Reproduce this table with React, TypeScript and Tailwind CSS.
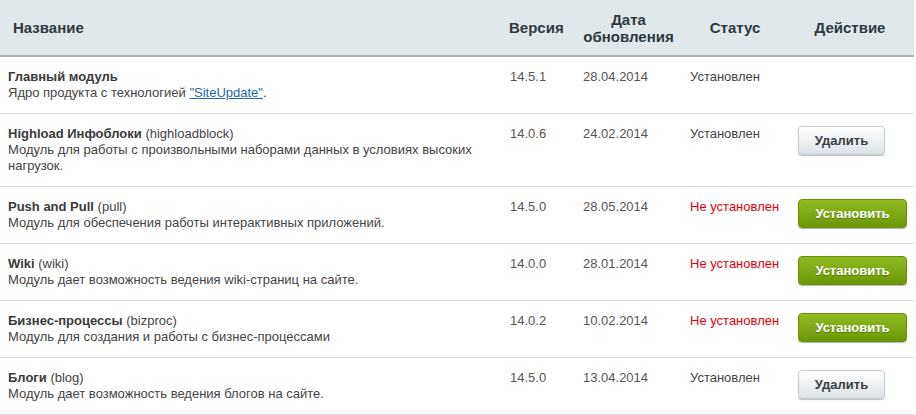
import React from "react";

type Row = {
  title: string;
  code?: string;
  desc: React.ReactNode;
  version: string;
  date: string;
  installed: boolean;
  action?: "delete" | "install";
};

const rows: Row[] = [
  {
    title: "Главный модуль",
    desc: (
      <>
        Ядро продукта с технологией{" "}
        <a href="#" className="text-[#2067b0] underline">
          "SiteUpdate"
        </a>
        .
      </>
    ),
    version: "14.5.1",
    date: "28.04.2014",
    installed: true,
  },
  {
    title: "Highload Инфоблоки",
    code: "highloadblock",
    desc: "Модуль для работы с произвольными наборами данных в условиях высоких нагрузок.",
    version: "14.0.6",
    date: "24.02.2014",
    installed: true,
    action: "delete",
  },
  {
    title: "Push and Pull",
    code: "pull",
    desc: "Модуль для обеспечения работы интерактивных приложений.",
    version: "14.5.0",
    date: "28.05.2014",
    installed: false,
    action: "install",
  },
  {
    title: "Wiki",
    code: "wiki",
    desc: "Модуль дает возможность ведения wiki-страниц на сайте.",
    version: "14.0.0",
    date: "28.01.2014",
    installed: false,
    action: "install",
  },
  {
    title: "Бизнес-процессы",
    code: "bizproc",
    desc: "Модуль для создания и работы с бизнес-процессами",
    version: "14.0.2",
    date: "10.02.2014",
    installed: false,
    action: "install",
  },
  {
    title: "Блоги",
    code: "blog",
    desc: "Модуль дает возможность ведения блогов на сайте.",
    version: "14.5.0",
    date: "13.04.2014",
    installed: true,
    action: "delete",
  },
];

export default function App() {
  return (
    <div
      className="w-[914px] bg-white text-[13px] leading-4 text-[#444]"
      style={{ fontFamily: '"Liberation Sans", Arial, sans-serif' }}
    >
      <div className="flex h-[57px] items-center bg-[#e1e8eb] border-b-2 border-[#acb2b5] text-[15px] leading-[17px] font-bold text-[#2f393e]">
        <div className="w-[502px] pl-[13px]">Название</div>
        <div className="w-[73px] pl-[7px]">Версия</div>
        <div className="w-[107px] text-center">
          Дата
          <br />
          обновления
        </div>
        <div className="w-[108px] text-center pr-[2px]">Статус</div>
        <div className="flex-1 text-center pr-[4px]">Действие</div>
      </div>
      {rows.map((r, i) => (
        <div key={i} className="flex border-b border-[#d7dcdf] pt-[12px] pb-[12px]">
          <div className="w-[502px] pl-2 pr-4">
            <div>
              <span className="font-bold text-[#3a3a3a]">{r.title}</span>
              {r.code && <span> ({r.code})</span>}
            </div>
            <div>{r.desc}</div>
          </div>
          <div className="w-[73px] pl-2 text-[#555]">{r.version}</div>
          <div className="w-[107px] pl-2 text-[#555]">{r.date}</div>
          <div className={`w-[108px] pl-2 ${r.installed ? "text-[#444]" : "text-[#e8000b]"}`}>
            {r.installed ? "Установлен" : "Не установлен"}
          </div>
          <div className="flex-1 pl-2">
            {r.action === "delete" && (
              <button className="h-[29px] w-[87px] rounded-[4px] border border-[#c4ccd0] bg-gradient-to-b from-[#ffffff] to-[#dbe3e6] text-[13px] font-bold text-[#3a3f42] shadow-[0_1px_1px_rgba(0,0,0,0.25)]">
                Удалить
              </button>
            )}
            {r.action === "install" && (
              <button className="h-[29px] w-[109px] rounded-[4px] border border-[#6a8f0c] bg-gradient-to-b from-[#91ba1f] to-[#6c9808] text-[13px] font-bold text-white shadow-[0_1px_1px_rgba(0,0,0,0.3)] [text-shadow:0_1px_0_rgba(0,0,0,0.3)]">
                Установить
              </button>
            )}
          </div>
        </div>
      ))}
    </div>
  );
}
